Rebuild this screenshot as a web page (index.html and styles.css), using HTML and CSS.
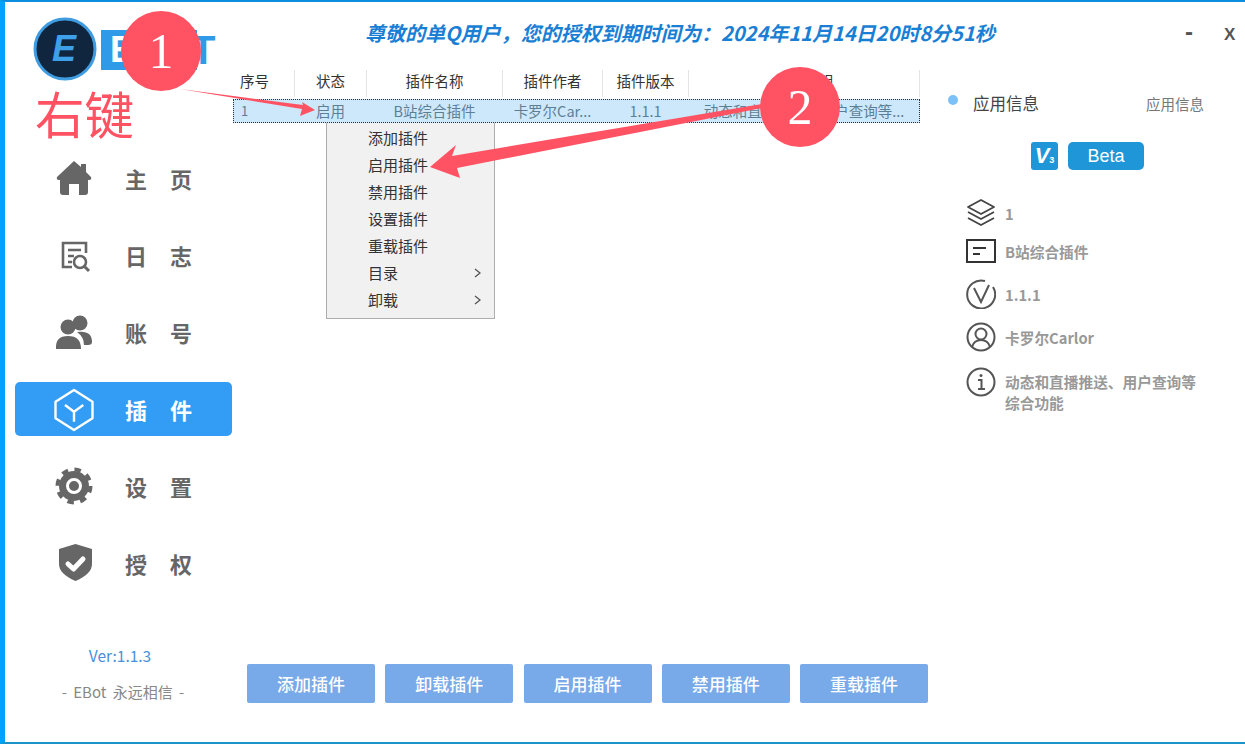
FILE: index.html
```html
<!DOCTYPE html>
<html lang="en">
<head>
    <meta charset="UTF-8">
    <meta name="viewport" content="width=device-width, initial-scale=1.0">
    <title>EBot</title>
    <link rel="stylesheet" href="styles.css">
</head>
<body>

    <div class="window">

        <div class="sidebar">
            <div class="logo">
                <svg class="logo-badge" width="66" height="66" viewBox="0 0 66 66">
                    <circle cx="33" cy="33" r="30" fill="#10263f" stroke="#3f9ce0" stroke-width="3"/>
                    <text x="32" y="45" text-anchor="middle" class="logo-e">E</text>
                </svg>
                <div class="logo-word"><span class="logo-word-e">E</span></div>
                <span class="logo-t">T</span>
            </div>

            <div class="nav">
                <div class="nav-item">
                    <svg class="nav-icon" viewBox="0 0 38 38">
                        <path fill="#666" d="M19 2 L26 8 V5 H31 V13 L36 18 Q37 21 34 21 H33 V33 Q33 36 30 36 H24 V25 H14 V36 H8 Q5 36 5 33 V21 H4 Q1 21 2 18 Z"/>
                    </svg>
                    <span class="nav-text">主页</span>
                </div>
                <div class="nav-item">
                    <svg class="nav-icon" viewBox="0 0 38 38">
                        <path fill="none" stroke="#666" stroke-width="2.6" d="M17 31 H8 V7 H31 V17 M13 14 H26 M13 20 H19 M13 26 H17"/>
                        <circle cx="25" cy="26" r="6" fill="none" stroke="#666" stroke-width="2.6"/>
                        <path stroke="#666" stroke-width="3" d="M29 30 L34 35"/>
                    </svg>
                    <span class="nav-text">日志</span>
                </div>
                <div class="nav-item">
                    <svg class="nav-icon" viewBox="0 0 38 38">
                        <circle cx="25" cy="10" r="7.5" fill="#666"/>
                        <path fill="#666" d="M22 19 Q37 17 37 29 Q37 32 33 32 H29 Q29 24 22 19 Z"/>
                        <circle cx="13" cy="14" r="7.5" fill="#666"/>
                        <path fill="#666" d="M1 36 Q0 23 13 23 Q26 23 26 36 Z"/>
                    </svg>
                    <span class="nav-text">账号</span>
                </div>
                <div class="nav-item active">
                    <svg class="nav-icon nav-icon-cube" viewBox="0 0 38 38">
                        <path fill="none" stroke="#fff" stroke-width="2.4" stroke-linejoin="round" d="M19 0 L37.5 11.7 V28.3 L19 40 L0.5 28.3 V11.7 Z M10 15 L19 21.7 L28.3 15 M19 21.7 V31.7"/>
                    </svg>
                    <span class="nav-text">插件</span>
                </div>
                <div class="nav-item">
                    <svg class="nav-icon" viewBox="0 0 38 38">
                        <circle cx="19" cy="19" r="16.5" fill="none" stroke="#666" stroke-width="4" stroke-dasharray="6.5 6.45"/>
                        <circle cx="19" cy="19" r="15" fill="#666"/>
                        <circle cx="19" cy="19" r="6.5" fill="none" stroke="#fff" stroke-width="3"/>
                    </svg>
                    <span class="nav-text">设置</span>
                </div>
                <div class="nav-item">
                    <svg class="nav-icon" viewBox="0 0 38 38">
                        <path fill="#666" d="M20.5 0 L37 5 V20 Q37 30 20.5 37 Q4 30 4 20 V5 Z"/>
                        <path fill="none" stroke="#fff" stroke-width="5" stroke-linecap="round" stroke-linejoin="round" d="M13 20 L18.5 25 L28 15"/>
                    </svg>
                    <span class="nav-text">授权</span>
                </div>
            </div>

            <div class="version">Ver:1.1.3</div>
            <div class="slogan">- EBot 永远相信 -</div>
        </div>

        <div class="main">
            <div class="topbar">
                <div class="title">尊敬的单Q用户，您的授权到期时间为：2024年11月14日20时8分51秒</div>
                <div class="win-btn win-min">-</div>
                <div class="win-btn win-close">X</div>
            </div>

            <div class="content">
                <div class="table">
                    <div class="table-row table-head">
                        <div class="cell cell-first">序号</div>
                        <div class="cell">状态</div>
                        <div class="cell">插件名称</div>
                        <div class="cell">插件作者</div>
                        <div class="cell">插件版本</div>
                        <div class="cell">插件说明</div>
                    </div>
                    <div class="table-row table-selected">
                        <div class="cell cell-first">1</div>
                        <div class="cell">启用</div>
                        <div class="cell">B站综合插件</div>
                        <div class="cell">卡罗尔Car...</div>
                        <div class="cell">1.1.1</div>
                        <div class="cell">动态和直播推送、用户查询等...</div>
                    </div>

                    <div class="menu">
                        <div class="menu-item">添加插件</div>
                        <div class="menu-item">启用插件</div>
                        <div class="menu-item">禁用插件</div>
                        <div class="menu-item">设置插件</div>
                        <div class="menu-item">重载插件</div>
                        <div class="menu-item">目录<svg class="menu-arrow" width="7" height="10" viewBox="0 0 7 10"><path fill="none" stroke="#555" stroke-width="1.3" d="M1 1 L6 5 L1 9"/></svg></div>
                        <div class="menu-item">卸载<svg class="menu-arrow" width="7" height="10" viewBox="0 0 7 10"><path fill="none" stroke="#555" stroke-width="1.3" d="M1 1 L6 5 L1 9"/></svg></div>
                    </div>
                </div>

                <div class="info">
                    <div class="info-tabs">
                        <span class="info-dot"></span>
                        <span class="info-tab">应用信息</span>
                        <span class="info-tab-right">应用信息</span>
                    </div>
                    <div class="badges">
                        <div class="badge-v">V<small>3</small></div>
                        <div class="badge-beta">Beta</div>
                    </div>
                    <div class="info-list">
                        <div class="info-row info-row-first">
                            <svg class="info-icon" viewBox="0 0 30 30">
                                <path fill="none" stroke="#444" stroke-width="1.8" stroke-linejoin="round" d="M15 2 L28 9 L15 16 L2 9 Z M2 14 L15 21 L28 14 M2 20 L15 27 L28 20"/>
                            </svg>
                            <span>1</span>
                        </div>
                        <div class="info-row">
                            <svg class="info-icon" viewBox="0 0 30 30">
                                <path fill="none" stroke="#333" stroke-width="2" d="M1 4 H29 V26 H1 Z M7 12 H20 M7 18 H14"/>
                            </svg>
                            <span>B站综合插件</span>
                        </div>
                        <div class="info-row">
                            <svg class="info-icon" viewBox="0 0 30 30">
                                <path fill="none" stroke="#555" stroke-width="2" d="M19 2 A14 14 0 1 0 27 8 M8 9 L15 23 L23 6"/>
                            </svg>
                            <span>1.1.1</span>
                        </div>
                        <div class="info-row">
                            <svg class="info-icon" viewBox="0 0 30 30">
                                <circle cx="15" cy="15" r="13.5" fill="none" stroke="#555" stroke-width="2"/>
                                <circle cx="15" cy="12" r="5.5" fill="none" stroke="#555" stroke-width="2"/>
                                <path fill="none" stroke="#555" stroke-width="2" d="M6 25 Q8 18 15 18 Q22 18 24 25"/>
                            </svg>
                            <span>卡罗尔Carlor</span>
                        </div>
                        <div class="info-row info-row-last">
                            <svg class="info-icon" viewBox="0 0 30 30">
                                <circle cx="15" cy="15" r="13.5" fill="none" stroke="#555" stroke-width="2"/>
                                <path fill="none" stroke="#555" stroke-width="2" d="M12 13 H15.5 V22 M12 22 H19"/>
                                <circle cx="15" cy="8.5" r="1.5" fill="#555"/>
                            </svg>
                            <span>动态和直播推送、用户查询等<br>综合功能</span>
                        </div>
                    </div>
                </div>
            </div>

            <div class="actions">
                <div class="action-btn">添加插件</div>
                <div class="action-btn">卸载插件</div>
                <div class="action-btn">启用插件</div>
                <div class="action-btn">禁用插件</div>
                <div class="action-btn">重载插件</div>
            </div>
        </div>

        <!-- annotations drawn on top of the screenshot -->
        <svg class="arrows" width="1245" height="744" viewBox="0 0 1245 744">
            <polygon fill="#ff5364" points="180,89 303,105 302,102 315,110 300,116 302,109"/>
            <polygon fill="#ff5364" points="430,167 456,145 452,156 762,104 762,108 457,168 460,178"/>
        </svg>
        <div class="marker marker-one">1</div>
        <div class="marker marker-two">2</div>
        <div class="note">右键</div>
    </div>

</body>
</html>
```

FILE: styles.css
```css
* {
    box-sizing: border-box;
}

body {
    margin: 0;
    font-family: "Noto Sans CJK SC", "Liberation Sans", sans-serif;
    background: #fff;
}

.window {
    position: relative;
    display: flex;
    width: 1245px;
    height: 744px;
    overflow: hidden;
    background: #fff;
    border-top: 2px solid #0a8fe0;
    border-bottom: 2px solid #1a93c9;
    border-left: 5px solid #00a2ff;
}

/* sidebar */
.sidebar {
    display: flex;
    flex-direction: column;
    flex-shrink: 0;
    width: 228px;
}

.logo {
    position: relative;
    display: flex;
    align-items: flex-start;
    height: 149px;
    padding-top: 28px;
    padding-left: 96px;
}

.logo-badge {
    position: absolute;
    top: 14px;
    left: 27px;
}

.logo-e {
    font-family: "Liberation Sans", sans-serif;
    font-size: 36px;
    font-weight: bold;
    font-style: italic;
    fill: #3fa0ea;
}

.logo-word {
    width: 96px;
    height: 40px;
    padding-left: 9px;
    background: #2f9ae8;
}

.logo-word-e {
    font-family: "Liberation Sans", sans-serif;
    font-size: 36px;
    font-weight: bold;
    line-height: 40px;
    color: #fff;
}

.logo-t {
    margin-left: -6px;
    font-family: "Liberation Sans", sans-serif;
    font-size: 40px;
    font-weight: bold;
    line-height: 40px;
    color: #2f9ae8;
}

.nav {
    display: flex;
    flex-direction: column;
    gap: 23px;
    margin-left: 10px;
    width: 217px;
}

.nav-item {
    display: flex;
    align-items: center;
    gap: 32px;
    height: 54px;
    padding-left: 40px;
    border-radius: 5px;
    color: #666;
}

.nav-item.active {
    background: #339cf5;
    color: #fff;
}

.nav-icon {
    width: 38px;
    height: 38px;
    flex-shrink: 0;
}

.nav-icon-cube {
    overflow: visible;
}

.nav-text {
    font-size: 22px;
    font-weight: bold;
    letter-spacing: 23px;
    white-space: nowrap;
}

.version {
    margin-top: 55px;
    padding-left: 2px;
    text-align: center;
    font-size: 15.5px;
    line-height: 20px;
    color: #4a8fd8;
}

.slogan {
    margin-top: 17px;
    padding-left: 8px;
    text-align: center;
    font-size: 15px;
    word-spacing: 3px;
    line-height: 20px;
    color: #888;
}

/* main area */
.main {
    display: flex;
    flex-direction: column;
    flex: 1;
    min-width: 0;
    padding-bottom: 39px;
}

.topbar {
    display: flex;
    align-items: center;
    height: 68px;
    padding: 0 4px 8px 132px;
}

.title {
    flex: 1;
    font-size: 20.05px;
    font-weight: bold;
    font-style: italic;
    color: #1a7fd4;
    white-space: nowrap;
}

.win-btn {
    font-family: "Liberation Sans", sans-serif;
    color: #555;
}

.win-min {
    width: 39px;
    font-size: 24px;
    font-weight: bold;
}

.win-close {
    width: 17px;
    margin-top: 5px;
    font-size: 17px;
    font-weight: bold;
}

.content {
    display: flex;
    flex: 1;
    min-height: 0;
}

/* plugin table */
.table {
    position: relative;
    width: 687px;
    flex-shrink: 0;
}

.table-row {
    display: grid;
    grid-template-columns: 62px 72px 136px 100px 86px 231px;
    align-items: center;
}

.table-head {
    height: 27px;
    margin-bottom: 2px;
    font-size: 14.5px;
    line-height: 22px;
    color: #333;
}

.table-head .cell {
    height: 27px;
    border-right: 1px solid #e4e4e4;
}

.table-head .cell-first {
    padding-right: 18px;
}

.cell {
    text-align: center;
    white-space: nowrap;
    overflow: hidden;
}

.table-selected {
    height: 24px;
    font-size: 14.5px;
    line-height: 21px;
    color: #5d7f95;
    background: #cde8fb;
    border: 1px dotted #24323f;
}

.table-selected .cell {
    height: 22px;
    padding-right: 3px;
}

.table-selected .cell-first {
    padding-left: 7px;
    padding-right: 0;
    text-align: left;
    font-size: 13px;
}

/* context menu */
.menu {
    position: absolute;
    top: 53px;
    left: 93px;
    width: 169px;
    height: 196px;
    padding: 1px 0;
    background: #f1f1f1;
    border: 1px solid #adadad;
    border-top: none;
}

.menu-item {
    position: relative;
    height: 27px;
    padding-left: 41px;
    font-size: 15px;
    line-height: 27px;
    color: #333;
}

.menu-arrow {
    position: absolute;
    top: 9px;
    right: 13px;
}

/* right panel */
.info {
    flex: 1;
    min-width: 0;
}

.info-tabs {
    display: flex;
    align-items: center;
    height: 24px;
    margin-top: 21px;
    padding-left: 28px;
}

.info-dot {
    width: 10px;
    height: 10px;
    margin-top: -6px;
    border-radius: 50%;
    background: #7cc0f5;
}

.info-tab {
    margin-left: 15px;
    font-size: 16.5px;
    color: #444;
}

.info-tab-right {
    margin-left: 107px;
    font-size: 14.5px;
    color: #777;
}

.badges {
    display: flex;
    align-items: center;
    gap: 10px;
    margin-top: 27px;
    padding-left: 111px;
}

.badge-v {
    width: 27px;
    height: 28px;
    border-radius: 3px;
    background: #1e96d8;
    color: #fff;
    font-family: "Liberation Sans", sans-serif;
    font-size: 22px;
    font-weight: bold;
    font-style: italic;
    line-height: 28px;
    text-align: center;
}

.badge-v small {
    font-size: 9px;
    font-style: normal;
}

.badge-beta {
    width: 76px;
    height: 28px;
    border-radius: 5px;
    background: #1e96d8;
    color: #fff;
    font-family: "Liberation Sans", sans-serif;
    font-size: 18px;
    line-height: 28px;
    text-align: center;
}

.info-list {
    display: flex;
    flex-direction: column;
    gap: 13px;
    margin-top: 28px;
    padding-left: 46px;
}

.info-row {
    display: flex;
    align-items: center;
    gap: 9px;
    min-height: 30px;
    font-size: 14.7px;
    font-weight: bold;
    line-height: 21px;
    color: #999;
}

.info-row-first {
    margin-bottom: -5px;
}

.info-row-last {
    align-items: flex-start;
    margin-top: 2px;
}

.info-row-last span {
    padding-top: 4px;
}

.info-icon {
    width: 30px;
    height: 30px;
    flex-shrink: 0;
}

/* bottom buttons */
.actions {
    display: flex;
    gap: 10.25px;
    padding-left: 14px;
}

.action-btn {
    width: 128px;
    height: 39px;
    border-radius: 2px;
    background: #78a9e8;
    color: #fff;
    font-size: 17px;
    font-weight: 500;
    line-height: 39px;
    text-align: center;
}

/* annotations */
.arrows {
    position: absolute;
    top: -2px;
    left: -5px;
}

.marker {
    position: absolute;
    width: 80px;
    height: 80px;
    border-radius: 50%;
    background: #ff5364;
    color: #fff;
    font-family: "Liberation Serif", serif;
    font-size: 50px;
    line-height: 80px;
    text-align: center;
}

.marker-one {
    top: 9px;
    left: 116px;
}

.marker-two {
    top: 65px;
    left: 755px;
}

.note {
    position: absolute;
    top: 78px;
    left: 30px;
    font-size: 49.5px;
    line-height: 66px;
    color: #ff5364;
}
```
